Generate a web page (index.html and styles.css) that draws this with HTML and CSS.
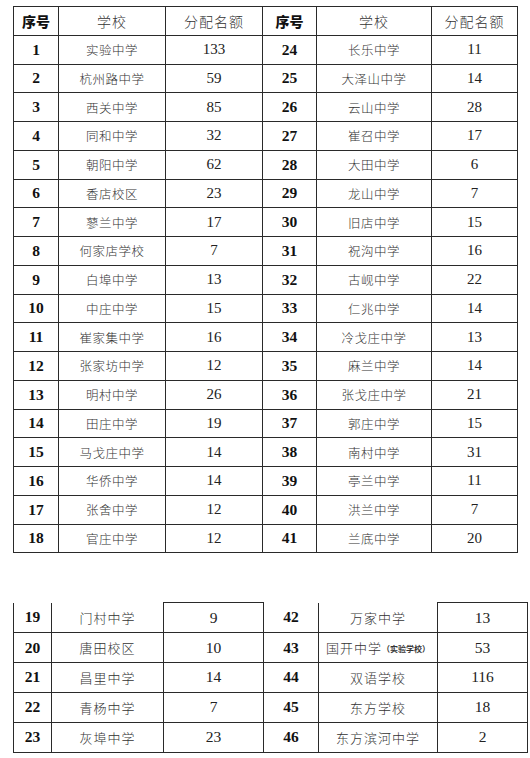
FILE: index.html
```html
<!DOCTYPE html>
<html lang="zh">
<head>
<meta charset="utf-8">
<link rel="stylesheet" href="styles.css">
</head>
<body>
<div class="page">
<table class="tbl top">
<colgroup><col class="c1"><col class="c2"><col class="c3"><col class="c4"><col class="c5"><col class="c6"></colgroup>
<tr class="head"><th class="hnum">序号</th><th>学校</th><th>分配名额</th><th class="hnum">序号</th><th>学校</th><th>分配名额</th></tr>
<tr><td class="num">1</td><td class="name">实验中学</td><td class="val">133</td><td class="num">24</td><td class="name">长乐中学</td><td class="val">11</td></tr>
<tr><td class="num">2</td><td class="name">杭州路中学</td><td class="val">59</td><td class="num">25</td><td class="name">大泽山中学</td><td class="val">14</td></tr>
<tr><td class="num">3</td><td class="name">西关中学</td><td class="val">85</td><td class="num">26</td><td class="name">云山中学</td><td class="val">28</td></tr>
<tr><td class="num">4</td><td class="name">同和中学</td><td class="val">32</td><td class="num">27</td><td class="name">崔召中学</td><td class="val">17</td></tr>
<tr><td class="num">5</td><td class="name">朝阳中学</td><td class="val">62</td><td class="num">28</td><td class="name">大田中学</td><td class="val">6</td></tr>
<tr><td class="num">6</td><td class="name">香店校区</td><td class="val">23</td><td class="num">29</td><td class="name">龙山中学</td><td class="val">7</td></tr>
<tr><td class="num">7</td><td class="name">蓼兰中学</td><td class="val">17</td><td class="num">30</td><td class="name">旧店中学</td><td class="val">15</td></tr>
<tr><td class="num">8</td><td class="name">何家店学校</td><td class="val">7</td><td class="num">31</td><td class="name">祝沟中学</td><td class="val">16</td></tr>
<tr><td class="num">9</td><td class="name">白埠中学</td><td class="val">13</td><td class="num">32</td><td class="name">古岘中学</td><td class="val">22</td></tr>
<tr><td class="num">10</td><td class="name">中庄中学</td><td class="val">15</td><td class="num">33</td><td class="name">仁兆中学</td><td class="val">14</td></tr>
<tr><td class="num">11</td><td class="name">崔家集中学</td><td class="val">16</td><td class="num">34</td><td class="name">冷戈庄中学</td><td class="val">13</td></tr>
<tr><td class="num">12</td><td class="name">张家坊中学</td><td class="val">12</td><td class="num">35</td><td class="name">麻兰中学</td><td class="val">14</td></tr>
<tr><td class="num">13</td><td class="name">明村中学</td><td class="val">26</td><td class="num">36</td><td class="name">张戈庄中学</td><td class="val">21</td></tr>
<tr><td class="num">14</td><td class="name">田庄中学</td><td class="val">19</td><td class="num">37</td><td class="name">郭庄中学</td><td class="val">15</td></tr>
<tr><td class="num">15</td><td class="name">马戈庄中学</td><td class="val">14</td><td class="num">38</td><td class="name">南村中学</td><td class="val">31</td></tr>
<tr><td class="num">16</td><td class="name">华侨中学</td><td class="val">14</td><td class="num">39</td><td class="name">亭兰中学</td><td class="val">11</td></tr>
<tr><td class="num">17</td><td class="name">张舍中学</td><td class="val">12</td><td class="num">40</td><td class="name">洪兰中学</td><td class="val">7</td></tr>
<tr><td class="num">18</td><td class="name">官庄中学</td><td class="val">12</td><td class="num">41</td><td class="name">兰底中学</td><td class="val">20</td></tr>
</table>

<table class="tbl bottom">
<colgroup><col class="d1"><col class="d2"><col class="d3"><col class="d4"><col class="d5"><col class="d6"></colgroup>
<tr class="first"><td class="num open">19</td><td class="name open">门村中学</td><td class="val">9</td><td class="num open">42</td><td class="name open">万家中学</td><td class="val">13</td></tr>
<tr><td class="num">20</td><td class="name">唐田校区</td><td class="val">10</td><td class="num">43</td><td class="name">国开中学<span class="note">（实验学校）</span></td><td class="val">53</td></tr>
<tr><td class="num">21</td><td class="name">昌里中学</td><td class="val">14</td><td class="num">44</td><td class="name">双语学校</td><td class="val">116</td></tr>
<tr><td class="num">22</td><td class="name">青杨中学</td><td class="val">7</td><td class="num">45</td><td class="name">东方学校</td><td class="val">18</td></tr>
<tr><td class="num">23</td><td class="name">灰埠中学</td><td class="val">23</td><td class="num">46</td><td class="name">东方滨河中学</td><td class="val">2</td></tr>
</table>
</div>
</body>
</html>
```

FILE: styles.css
```css
html, body {
  margin: 0;
  padding: 0;
  background: #ffffff;
}

.page {
  padding: 6px 0 0 13px;
  display: flex;
  flex-direction: column;
  align-items: flex-start;
  gap: 49px;
}

.tbl {
  border-collapse: collapse;
  table-layout: fixed;
  font-family: "Liberation Serif", "Noto Sans CJK SC", serif;
  color: #222;
}

.tbl td, .tbl th {
  border: 1px solid #2a2a2a;
  text-align: center;
  vertical-align: middle;
  padding: 0;
  white-space: nowrap;
  overflow: hidden;
}

.top { width: 504px; }
.top tr { height: 28.75px; }
.c1 { width: 45px; }
.c2 { width: 107px; }
.c3 { width: 97px; }
.c4 { width: 54px; }
.c5 { width: 115px; }
.c6 { width: 86px; }

.bottom { width: 514px; }
.bottom tr { height: 29.9px; }
.d1 { width: 38px; }
.d2 { width: 112px; }
.d3 { width: 100px; }
.d4 { width: 55px; }
.d5 { width: 119px; }
.d6 { width: 90px; }

.bottom .open { border-top: none; }

.tbl th {
  font-family: "Noto Sans CJK SC", sans-serif;
  font-weight: 300;
  font-size: 14px;
  letter-spacing: 1px;
  color: #333;
}

.tbl th.hnum {
  font-weight: 900;
  font-size: 14px;
  letter-spacing: 0;
  color: #111;
}

.num {
  font-family: "Liberation Serif", serif;
  font-weight: 700;
  font-size: 15.5px;
  color: #111;
}

.name {
  font-family: "Noto Sans CJK SC", sans-serif;
  font-weight: 300;
  font-size: 12.5px;
  letter-spacing: 0.5px;
  color: #333;
}

.bottom .name {
  font-size: 13px;
  letter-spacing: 1px;
}

.val {
  font-family: "Liberation Serif", serif;
  font-size: 15px;
  color: #222;
}

.bottom .val {
  font-size: 15.5px;
}

.note {
  font-size: 8px;
  font-weight: 700;
  letter-spacing: 0;
  color: #333;
  vertical-align: 1px;
}
```
